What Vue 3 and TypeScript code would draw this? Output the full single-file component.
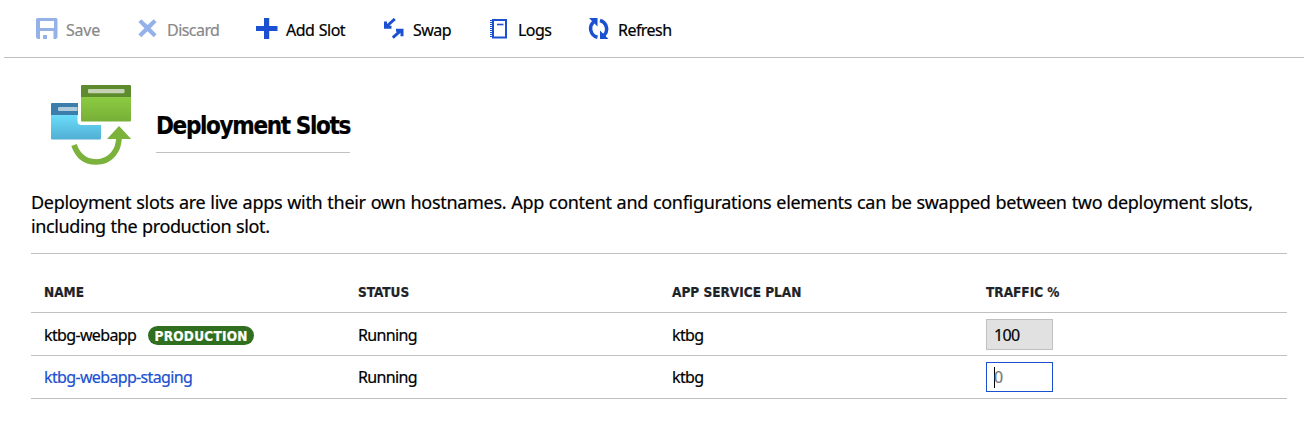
<script setup lang="ts">
interface Command {
  id: string
  label: string
  disabled: boolean
}

interface Slot {
  name: string
  production: boolean
  status: string
  plan: string
  traffic: string
}

const commands: Command[] = [
  { id: 'save', label: 'Save', disabled: true },
  { id: 'discard', label: 'Discard', disabled: true },
  { id: 'add', label: 'Add Slot', disabled: false },
  { id: 'swap', label: 'Swap', disabled: false },
  { id: 'logs', label: 'Logs', disabled: false },
  { id: 'refresh', label: 'Refresh', disabled: false },
]

const slots: Slot[] = [
  { name: 'ktbg-webapp', production: true, status: 'Running', plan: 'ktbg', traffic: '100' },
  { name: 'ktbg-webapp-staging', production: false, status: 'Running', plan: 'ktbg', traffic: '0' },
]
</script>

<template>
  <div class="page">
    <nav class="toolbar">
      <button
        v-for="c in commands"
        :key="c.id"
        type="button"
        class="command"
        :class="['command-' + c.id, { disabled: c.disabled }]"
      >
        <svg class="icon" width="22" height="22" viewBox="0 0 22 22" fill="currentColor">
          <path
            v-if="c.id === 'save'"
            fill-rule="evenodd"
            d="M1.500 0H20a1.500 1.500 0 0 1 1.500 1.500V19.500L20 21H17.500V13H4V21H1.500L0 19.500V1.500A1.500 1.500 0 0 1 1.500 0ZM4 3V10h14V3ZM7 17h4v4H7Z"
          />
          <path v-else-if="c.id === 'discard'" d="M3.300 1.200 9.500 7l6.200-5.800 2.900 2.900-6 6.200 6 6-2.900 2.900-6.200-5.900-6.200 5.900L.4 16.300l6-6-6-6.200Z" />
          <path v-else-if="c.id === 'add'" d="M8 0h5.200v8H21.500v5H13.200v8H8v-8H0V8h8Z" />
          <g v-else-if="c.id === 'swap'" fill="none" stroke="currentColor" stroke-width="3">
            <path d="M10.800 1 2.500 8.500M1.500 3.500v5.700h6" />
            <path d="M8.800 19.600 17.300 12.200M12 12.200H18v6" />
          </g>
          <g v-else-if="c.id === 'logs'" fill="none" stroke="currentColor">
            <path stroke-width="2" d="M3 2h13v17.500H3Z" />
            <path stroke-width="1.600" d="M7 6.500h6.500" />
            <path stroke-width="2.500" stroke-dasharray="1 1" d="M1.250 2v18" />
          </g>
          <g v-else>
            <path d="M1 0H9.500V8.500ZM12 12.500V21H20.500Z" />
            <path fill="none" stroke="currentColor" stroke-width="3.500" d="M9.500 19.300A9 9 0 0 1 5.500 4M12 2.500A9 9 0 0 1 16 17.500" />
          </g>
        </svg>
        <span class="label">{{ c.label }}</span>
      </button>
    </nav>

    <main class="content">
      <header class="heading">
        <svg class="hero" width="82" height="82" viewBox="0 0 82 82">
          <defs>
            <linearGradient id="blue" x1="0" y1="0" x2="0" y2="1">
              <stop offset="0" stop-color="#6bdcfa" />
              <stop offset="1" stop-color="#50afd4" />
            </linearGradient>
            <linearGradient id="green" x1="0" y1="0" x2="0" y2="1">
              <stop offset="0" stop-color="#8bcb42" />
              <stop offset="1" stop-color="#78af37" />
            </linearGradient>
          </defs>
          <path d="M1 18h26v12H0V19q0-1 1-1Z" fill="#3b7eac" />
          <path d="M0 30h26.500v6q0 4 4 4H50v13.500q0 1-1 1H1q-1 0-1-1Z" fill="url(#blue)" />
          <path d="M8 22h18.500v4H8q-1 0-1-1v-2q0-1 1-1Z" fill="#b0cbd9" />
          <path d="M31 0h48q1 0 1 1v11H30V1q0-1 1-1Z" fill="#5f8b2f" />
          <path d="M30 12h50v23.500q0 1-1 1H31q-1 0-1-1Z" fill="url(#green)" />
          <rect x="37" y="4" width="36.500" height="4.200" rx="1" fill="#c5d2b3" />
          <path d="M23 60Q29 77 45 77C60 77 68 65 68 52" fill="none" stroke="#7bb23b" stroke-width="5.700" />
          <path d="M68 41 80.200 54H56Z" fill="#7bb23b" />
        </svg>
        <h1 class="title">Deployment Slots</h1>
      </header>

      <p class="intro">
        <span class="line line-long">Deployment slots are live apps with their own hostnames. App content and configurations elements can be swapped between two deployment slots,</span>
        {{ ' ' }}
        <span class="line">including the production slot.</span>
      </p>

      <section class="grid">
        <div class="row head">
          <div>NAME</div>
          <div>STATUS</div>
          <div>APP SERVICE PLAN</div>
          <div>TRAFFIC %</div>
        </div>
        <div v-for="s in slots" :key="s.name" class="row" :class="{ first: s.production }">
          <div class="name">
            <span class="text" :class="{ link: !s.production }">{{ s.name }}</span>
            <span v-if="s.production" class="badge">PRODUCTION</span>
          </div>
          <div class="text">{{ s.status }}</div>
          <div class="text">{{ s.plan }}</div>
          <div>
            <div v-if="s.production" class="field readonly">{{ s.traffic }}</div>
            <div v-else class="field focused"><i class="caret"></i><span>{{ s.traffic }}</span></div>
          </div>
        </div>
      </section>
    </main>
  </div>
</template>

<style>
body {
  margin: 0;
  background: #fff;
}
</style>

<style scoped>
.page {
  height: 422px;
  overflow: hidden;
  box-sizing: border-box;
  background: #fff;
  color: #000;
  font-family: "Noto Sans", "Open Sans", sans-serif;
  font-size: 16px;
  letter-spacing: -0.650px;
  -webkit-text-stroke: 0.200px currentColor;
}

.toolbar {
  box-sizing: border-box;
  height: 58px;
  margin-left: 4px;
  padding: 0 0 0 32px;
  display: flex;
  align-items: flex-start;
  border-bottom: 1px solid #c0c0c0;
}

.command {
  display: flex;
  align-items: flex-start;
  gap: 8px;
  height: 57px;
  padding: 18px 0 0;
  border: 0;
  background: none;
  color: #000;
  font: inherit;
  letter-spacing: -0.550px;
  word-spacing: 1px;
  text-align: left;
}

.command-save {
  width: 102px;
  letter-spacing: -0.250px;
}
.command-discard { width: 118px; }
.command-add { width: 128px; }
.command-swap { width: 106px; }
.command-logs { width: 98px; }
.command-discard .icon { margin-right: -1px; }
.command-swap .icon { margin-right: -1px; }
.command-logs .icon { margin-right: -2px; }

.icon {
  flex: none;
  color: #1b51d0;
}

.disabled .icon {
  color: #94b2e9;
}

.label {
  line-height: 24px;
  white-space: nowrap;
}

.disabled .label {
  color: #888;
}

.content {
  padding: 27px 17px 0 31px;
}

.heading {
  display: flex;
  align-items: flex-start;
  gap: 23px;
  height: 105px;
  padding-left: 20px;
}

.hero {
  flex: none;
}

.title {
  width: 194px;
  height: 42px;
  margin: 0;
  padding-top: 25px;
  border-bottom: 1px solid #c0c0c0;
  font-family: "DejaVu Sans Condensed", "DejaVu Sans", sans-serif;
  font-stretch: condensed;
  font-size: 24px;
  line-height: 32px;
  font-weight: 700;
  letter-spacing: -1.350px;
  white-space: nowrap;
}

.intro {
  margin: 0;
  height: 63px;
  font-size: 18px;
  line-height: 24px;
  letter-spacing: -0.380px;
  word-spacing: 0.550px;
}

.line {
  display: block;
  white-space: nowrap;
}

.line-long {
  letter-spacing: -0.300px;
}

.grid {
  border-top: 1px solid #c0c0c0;
}

.row {
  box-sizing: border-box;
  height: 43px;
  padding-left: 13px;
  display: grid;
  grid-template-columns: 314px 314px 314px 1fr;
  align-items: center;
  border-bottom: 1px solid #c0c0c0;
}

.head {
  height: 59px;
  padding-top: 18px;
  color: #1f2328;
  font-family: "DejaVu Sans Condensed", "DejaVu Sans", sans-serif;
  font-stretch: condensed;
  font-size: 13.500px;
  font-weight: 700;
  letter-spacing: 0;
}

.name {
  display: flex;
  align-items: center;
}

.first .text {
  padding-top: 2px;
}

.first .name {
  padding-top: 2px;
}

.first .name .text {
  padding-top: 0;
}

.link {
  color: #1b51d0;
}

.badge {
  width: 106px;
  height: 19px;
  margin-left: 12px;
  border-radius: 10px;
  background: #2f6f1f;
  color: #fff;
  font-family: "DejaVu Sans Condensed", "DejaVu Sans", sans-serif;
  font-stretch: condensed;
  font-size: 13.500px;
  line-height: 20px;
  font-weight: 700;
  letter-spacing: 0.250px;
  text-align: center;
}

.field {
  box-sizing: border-box;
  width: 67px;
  height: 31px;
  padding-left: 7px;
  display: flex;
  align-items: center;
  border: 1px solid #c0c0c0;
}

.readonly {
  padding-top: 2px;
  background: #e1e1e1;
}

.focused {
  height: 30px;
  border-color: #1b51d0;
  color: #767676;
}

.caret {
  width: 1px;
  height: 21px;
  margin-right: -1px;
  background: #000;
}
</style>
